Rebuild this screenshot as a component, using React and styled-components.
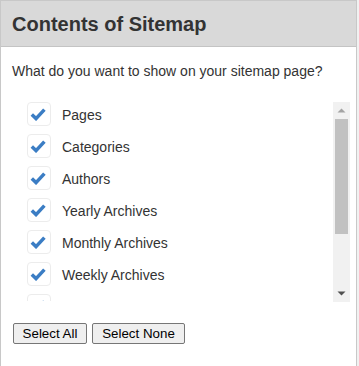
import React, { useState } from 'react';
import styled, { createGlobalStyle } from 'styled-components';

const GlobalStyle = createGlobalStyle`
  html, body {
    margin: 0;
    padding: 0;
    background: #f1f1f1;
  }
  body {
    font-family: "Liberation Sans", Arial, sans-serif;
  }
`;

const items = [
    "Pages",
    "Categories",
    "Authors",
    "Yearly Archives",
    "Monthly Archives",
    "Weekly Archives",
    "Daily Archives",
    "Tags",
    "Posts",
];

const ROW = 32;
const VIEW = 200;
const ARROW = 17;

function Scrollbar({ total }) {
    const track = VIEW - ARROW * 2
    const thumb = Math.round(track * VIEW / total)

    return (
        <Bar>
            <ArrowBtn>
                <svg width="9" height="5" viewBox="0 0 9 5">
                    <polygon points="0.5,4.5 4.5,0.5 8.5,4.5" fill="#a3a3a3" />
                </svg>
            </ArrowBtn>
            <Track>
                <Thumb style={{ height: thumb }} />
            </Track>
            <ArrowBtn>
                <svg width="9" height="5" viewBox="0 0 9 5">
                    <polygon points="0.5,0.5 8.5,0.5 4.5,4.5" fill="#505050" />
                </svg>
            </ArrowBtn>
        </Bar>
    )
}

function Sitemap_box() {

    let [checked, setchecked] = useState(items.map(() => true))

    const toggle = (i) => {
        setchecked(checked.map((c, j) => (j === i ? !c : c)))
    }

    return (
        <Panel>
            <Header>
                <Title>Contents of Sitemap</Title>
            </Header>
            <Body>
                <Intro>What do you want to show on your sitemap page?</Intro>

                <ListWrap>
                    <List>
                        {
                            items.map((name, i) => (
                                <Row key={name} onClick={() => toggle(i)}>
                                    <Box>
                                        {checked[i] && (
                                            <svg width="16" height="13" viewBox="0 0 16 13">
                                                <path d="M1.8 6.6 L6 10.6 L14.4 1.6" fill="none" stroke="#3b7dc4" strokeWidth="3.5" strokeLinecap="butt" strokeLinejoin="miter" />
                                            </svg>
                                        )}
                                    </Box>
                                    <Label>{name}</Label>
                                </Row>
                            ))
                        }
                    </List>
                    <Scrollbar total={items.length * ROW} />
                </ListWrap>

                <Actions>
                    <Button $w={74} onClick={() => setchecked(items.map(() => true))}>Select All</Button>
                    <Button $w={93} onClick={() => setchecked(items.map(() => false))}>Select None</Button>
                </Actions>
            </Body>
        </Panel>
    );
}

const Panel = styled.div`
  width: 357px;
  min-height: 380px;
  box-sizing: border-box;
  background: #fff;
  border: 1px solid #c8c8c8;
  border-bottom: none;
`;

const Header = styled.div`
  height: 45px;
  background: #d9d9d9;
  border-bottom: 1px solid #c4c4c4;
  display: flex;
  align-items: center;
  padding: 0 11px;
`;

const Title = styled.h2`
  margin: 0;
  font-size: 20px;
  font-weight: bold;
  color: #333;
  padding-top: 1px;
`;

const Body = styled.div`
  padding: 15px 6px 0 11px;
`;

const Intro = styled.p`
  margin: 0;
  font-size: 14px;
  line-height: 18px;
  color: #333;
`;

const ListWrap = styled.div`
  margin-top: 22px;
  height: ${VIEW}px;
  display: flex;
`;

const List = styled.div`
  flex: 1;
  height: 199px;
  overflow: hidden;
  padding-left: 15px;
`;

const Bar = styled.div`
  width: 17px;
  flex-shrink: 0;
  background: #f1f1f1;
  display: flex;
  flex-direction: column;
`;

const ArrowBtn = styled.div`
  height: ${ARROW}px;
  display: flex;
  align-items: center;
  justify-content: center;
  flex-shrink: 0;
`;

const Track = styled.div`
  flex: 1;
  padding: 0 2px;
`;

const Thumb = styled.div`
  background: #c1c1c1;
`;

const Row = styled.div`
  display: flex;
  align-items: center;
  height: 24px;
  margin-bottom: ${ROW - 24}px;
  cursor: pointer;
`;

const Box = styled.span`
  width: 24px;
  height: 24px;
  box-sizing: border-box;
  border: 1px solid #ececec;
  border-radius: 4px;
  background: #fff;
  display: flex;
  align-items: center;
  justify-content: center;
  flex-shrink: 0;
  padding-top: 1px;
  padding-right: 2px;
`;

const Label = styled.span`
  margin-left: 11px;
  font-size: 14px;
  color: #333;
  padding-top: 2px;
`;

const Actions = styled.div`
  display: flex;
  gap: 5px;
  margin-top: 21px;
  padding-left: 1px;
`;

const Button = styled.button`
  width: ${(p) => p.$w}px;
  font-family: "Liberation Sans", Arial, sans-serif;
  font-size: 13.333px;
  color: #000;
  background: #efefef;
  border: 1px solid #767676;
  border-radius: 2px;
  padding: 1px 0;
  height: 21px;
  line-height: 17px;
  text-align: center;
  cursor: pointer;
`;

export default function App() {
    return (
        <>
            <GlobalStyle />
            <Sitemap_box />
        </>
    );
}
